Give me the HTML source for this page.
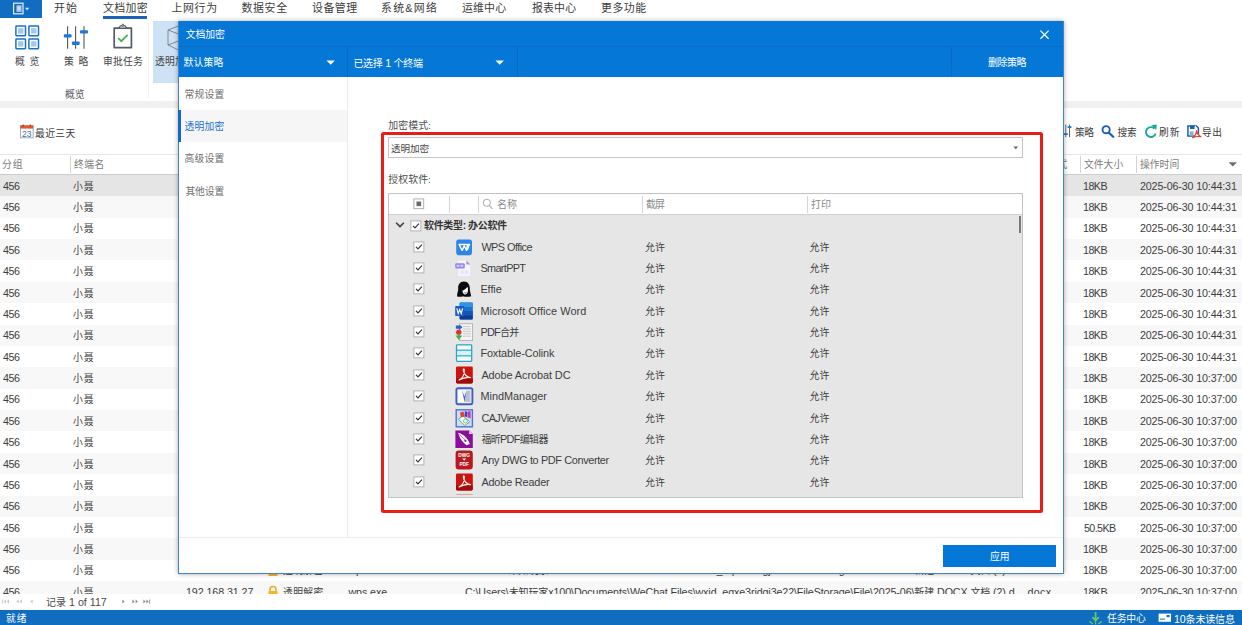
<!DOCTYPE html><html lang="zh-CN"><head><meta charset="utf-8"><title>文档加密</title><style>
*{margin:0;padding:0;box-sizing:border-box}
html,body{width:1242px;height:625px;overflow:hidden;background:#fff}
body{font-family:"Liberation Sans","Noto Sans CJK SC",sans-serif;position:relative}
.t{position:absolute;white-space:nowrap;line-height:16px;height:16px}
.r{position:absolute}
svg{position:absolute;overflow:visible}
.b{font-weight:bold}
</style></head><body>
<div class="r" style="left:0px;top:0px;width:42px;height:18px;background:#106dc2;"></div>
<svg style="left:12px;top:2px" width="20" height="14" viewBox="0 0 20 14"><rect x="1.6" y="1.2" width="9.4" height="10.6" fill="#1d64b2" stroke="#e4effb" stroke-width="1.2"/><rect x="4.4" y="3.2" width="5.2" height="6.8" fill="#9cc3ec"/><rect x="5.6" y="4.6" width="2.8" height="3.6" fill="#c9def5"/><path d="M12.9 5.8 L17.3 5.8 L15.1 8.2 Z" fill="#dbeafa"/></svg>
<div class="t menu" style="left:54.00px;top:0.40px;font-size:10.9px;color:#3c3c3c;letter-spacing:1.000px;">开始</div>
<div class="t menu" style="left:103.00px;top:0.40px;font-size:10.9px;color:#3c3c3c;letter-spacing:0.333px;">文档加密</div>
<div class="t menu" style="left:171.50px;top:0.40px;font-size:10.9px;color:#3c3c3c;letter-spacing:0.667px;">上网行为</div>
<div class="t menu" style="left:241.50px;top:0.40px;font-size:10.9px;color:#3c3c3c;letter-spacing:0.667px;">数据安全</div>
<div class="t menu" style="left:312.00px;top:0.40px;font-size:10.9px;color:#3c3c3c;letter-spacing:0.500px;">设备管理</div>
<div class="t menu" style="left:381.00px;top:0.40px;font-size:10.9px;color:#3c3c3c;letter-spacing:1.250px;">系统&amp;网络</div>
<div class="t menu" style="left:462.00px;top:0.40px;font-size:10.9px;color:#3c3c3c;letter-spacing:0.167px;">运维中心</div>
<div class="t menu" style="left:532.00px;top:0.40px;font-size:10.9px;color:#3c3c3c;letter-spacing:0.167px;">报表中心</div>
<div class="t menu" style="left:601.00px;top:0.40px;font-size:10.9px;color:#3c3c3c;letter-spacing:0.500px;">更多功能</div>
<div class="r" style="left:103px;top:16px;width:44px;height:2.5px;background:#1c62b6;"></div>
<svg style="left:0;top:0" width="200" height="100"><rect x="15.9" y="26.1" width="9.6" height="9.6" rx="0.6" fill="#fff" stroke="#1b72cb" stroke-width="1.5"/><rect x="18.0" y="28.200000000000003" width="5.4" height="5.4" fill="#a3c8ee"/><rect x="28.9" y="26.1" width="9.6" height="9.6" rx="0.6" fill="#fff" stroke="#1b72cb" stroke-width="1.5"/><rect x="31.0" y="28.200000000000003" width="5.4" height="5.4" fill="#a3c8ee"/><rect x="15.9" y="39.1" width="9.6" height="9.6" rx="0.6" fill="#fff" stroke="#1b72cb" stroke-width="1.5"/><rect x="18.0" y="41.2" width="5.4" height="5.4" fill="#a3c8ee"/><rect x="28.9" y="39.1" width="9.6" height="9.6" rx="0.6" fill="#fff" stroke="#1b72cb" stroke-width="1.5"/><rect x="31.0" y="41.2" width="5.4" height="5.4" fill="#a3c8ee"/></svg>
<svg style="left:0;top:0" width="200" height="100"><g stroke="#50545c" stroke-width="1.1"><line x1="67.6" y1="26.3" x2="67.6" y2="48.8"/><line x1="75.6" y1="26.3" x2="75.6" y2="48.8"/><line x1="84" y1="26.3" x2="84" y2="48.8"/></g><g fill="#1b78d6"><rect x="63.8" y="34.2" width="7.8" height="3.3" rx="0.8"/><rect x="71.9" y="41.6" width="7.8" height="3.3" rx="0.8"/><rect x="80" y="30.2" width="8" height="3.3" rx="0.8"/></g></svg>
<svg style="left:0;top:0" width="200" height="100"><rect x="114.2" y="28.1" width="17.2" height="19.5" fill="none" stroke="#555b66" stroke-width="1.7" stroke-linejoin="round"/><path d="M118.8 28 L120.4 25.9 L125.2 25.9 L126.8 28 Z" fill="#fff" stroke="#555b66" stroke-width="1.2" stroke-linejoin="round"/><circle cx="122.8" cy="25.2" r="1" fill="#fff" stroke="#555b66" stroke-width="1"/><path d="M118.2 38 L121.3 41.2 L127.6 34.8" fill="none" stroke="#3db24b" stroke-width="1.7"/></svg>
<div class="t rib" style="left:15.00px;top:53.70px;font-size:9.8px;color:#444;letter-spacing:1.000px;">概&nbsp;览</div>
<div class="t rib" style="left:64.00px;top:53.70px;font-size:9.8px;color:#444;letter-spacing:1.000px;">策&nbsp;略</div>
<div class="t rib" style="left:103.00px;top:53.70px;font-size:9.8px;color:#444;letter-spacing:0.167px;">审批任务</div>
<div class="r" style="left:152.8px;top:21px;width:40px;height:61.7px;background:#cee2f6;"></div>
<svg style="left:0;top:0" width="200" height="100"><path d="M178.5 26 L168 30 L168 45 L178.5 50 M168 30 L178.5 34 M168 45 L178.5 41" fill="none" stroke="#7a7f88" stroke-width="0.9"/></svg>
<div class="t rib" style="left:155.00px;top:53.70px;font-size:9.8px;color:#444;letter-spacing:0.167px;">透明加密</div>
<div class="r" style="left:147.6px;top:22px;width:1px;height:76px;background:#f4f1ee;"></div>
<div class="t rib" style="left:65.00px;top:86.90px;font-size:9.8px;color:#555;">概览</div>
<div class="r" style="left:0px;top:101px;width:1242px;height:7.4px;background:#f0f0f0;"></div>
<svg style="left:20px;top:124px" width="14" height="15" viewBox="0 0 14 15"><rect x="0.5" y="1.8" width="12.6" height="12" fill="#fff" stroke="#8fa6c4" stroke-width="0.9"/><rect x="0.3" y="1.4" width="13" height="3.2" fill="#e4572e"/><rect x="2.6" y="0.6" width="1.3" height="2" fill="#b5301a"/><rect x="9.6" y="0.6" width="1.3" height="2" fill="#b5301a"/><text x="6.8" y="12.6" font-size="8.6" text-anchor="middle" fill="#4a6fa5" font-family='"Liberation Sans",sans-serif'>23</text></svg>
<div class="t tb" style="left:35.00px;top:125.60px;font-size:9.8px;color:#3a3a3a;letter-spacing:0.333px;">最近三天</div>
<svg style="left:1060px;top:120px" width="182" height="24" viewBox="0 0 182 24"><g stroke="#50545c" stroke-width="0.9"><line x1="5.8" y1="4.6" x2="5.8" y2="17.2"/><line x1="9.5" y1="4.6" x2="9.5" y2="17.2"/></g><rect x="3.8" y="13.2" width="4" height="1.8" fill="#1b78d6"/><rect x="7.6" y="6.2" width="3.8" height="1.8" fill="#1b78d6"/><circle cx="46.1" cy="9.7" r="3.6" fill="none" stroke="#1a5fb4" stroke-width="1.9"/><line x1="49" y1="12.7" x2="53.2" y2="16.8" stroke="#1a5fb4" stroke-width="2.3" stroke-linecap="round"/><path d="M94.4 8.6 A4.9 4.9 0 1 0 95.6 13.4" fill="none" stroke="#17a99b" stroke-width="1.9"/><path d="M91.4 5.2 L96.8 4.4 L96.2 10 Z" fill="#17a99b"/><path d="M127.9 6 L136.4 6 L138.4 8 L138.4 16 L127.9 16 Z" fill="#fff" stroke="#1b5fb8" stroke-width="1.5"/><rect x="130" y="5.6" width="4.6" height="3.4" fill="#1b5fb8"/><rect x="134.9" y="6.2" width="1.2" height="2.2" fill="#fff"/><rect x="129.6" y="11.4" width="4" height="4.4" fill="#86afe2"/><path d="M132.6 17.8 C135 16 136.4 13.4 136.6 10.6 C137.2 13.4 138.6 15.6 141 16.8 C138 16.2 135.4 16.6 132.6 17.8 Z" fill="#fff" stroke="#e53b24" stroke-width="1.1" stroke-linejoin="round"/></svg>
<div class="t tb" style="left:1075.00px;top:124.50px;font-size:9.7px;color:#3a3a3a;letter-spacing:-0.500px;">策略</div>
<div class="t tb" style="left:1117.40px;top:124.50px;font-size:9.7px;color:#3a3a3a;letter-spacing:-0.200px;">搜索</div>
<div class="t tb" style="left:1159.00px;top:124.50px;font-size:9.7px;color:#3a3a3a;letter-spacing:1.000px;">刷新</div>
<div class="t tb" style="left:1202.00px;top:124.50px;font-size:9.7px;color:#3a3a3a;letter-spacing:0.600px;">导出</div>
<div class="r" style="left:0px;top:154px;width:1242px;height:1px;background:#e6e6e6;"></div>
<div class="r" style="left:0px;top:174.3px;width:1242px;height:1.4px;background:#cdcdcd;"></div>
<div class="r" style="left:70.2px;top:156.2px;width:1px;height:16.6px;background:#d4d4d4;"></div>
<div class="r" style="left:1080px;top:156.2px;width:1px;height:16.6px;background:#d4d4d4;"></div>
<div class="r" style="left:1136px;top:156.2px;width:1px;height:16.6px;background:#d4d4d4;"></div>
<div class="t hd" style="left:2.00px;top:157.20px;font-size:9.8px;color:#7b7b7b;letter-spacing:1.000px;">分组</div>
<div class="t hd" style="left:74.00px;top:157.20px;font-size:9.8px;color:#7b7b7b;letter-spacing:0.500px;">终端名</div>
<div class="t hd" style="left:1057.60px;top:157.20px;font-size:9.8px;color:#7b7b7b;">式</div>
<div class="t hd" style="left:1084.00px;top:157.20px;font-size:9.8px;color:#7b7b7b;">文件大小</div>
<div class="t hd" style="left:1140.00px;top:157.20px;font-size:9.8px;color:#7b7b7b;">操作时间</div>
<svg style="left:1228px;top:161px" width="10" height="6"><path d="M0.6 1.2 L9 1.2 L4.8 5.4 Z" fill="#6e6e6e"/></svg>
<div class="r" style="left:0px;top:175.0px;width:1242px;height:21.37px;background:#e5e5e5;"></div>
<div class="r" style="left:0px;top:196.37px;width:1242px;height:21.37px;background:#f8f8f8;"></div>
<div class="r" style="left:0px;top:217.74px;width:1242px;height:21.37px;background:#ffffff;"></div>
<div class="r" style="left:0px;top:239.11px;width:1242px;height:21.37px;background:#f8f8f8;"></div>
<div class="r" style="left:0px;top:260.48px;width:1242px;height:21.37px;background:#ffffff;"></div>
<div class="r" style="left:0px;top:281.85px;width:1242px;height:21.37px;background:#f8f8f8;"></div>
<div class="r" style="left:0px;top:303.22px;width:1242px;height:21.37px;background:#ffffff;"></div>
<div class="r" style="left:0px;top:324.59px;width:1242px;height:21.37px;background:#f8f8f8;"></div>
<div class="r" style="left:0px;top:345.96px;width:1242px;height:21.37px;background:#ffffff;"></div>
<div class="r" style="left:0px;top:367.33px;width:1242px;height:21.37px;background:#f8f8f8;"></div>
<div class="r" style="left:0px;top:388.7px;width:1242px;height:21.37px;background:#ffffff;"></div>
<div class="r" style="left:0px;top:410.07px;width:1242px;height:21.37px;background:#f8f8f8;"></div>
<div class="r" style="left:0px;top:431.44px;width:1242px;height:21.37px;background:#ffffff;"></div>
<div class="r" style="left:0px;top:452.81px;width:1242px;height:21.37px;background:#f8f8f8;"></div>
<div class="r" style="left:0px;top:474.18px;width:1242px;height:21.37px;background:#ffffff;"></div>
<div class="r" style="left:0px;top:495.55px;width:1242px;height:21.37px;background:#f8f8f8;"></div>
<div class="r" style="left:0px;top:516.92px;width:1242px;height:21.37px;background:#ffffff;"></div>
<div class="r" style="left:0px;top:538.29px;width:1242px;height:21.37px;background:#f8f8f8;"></div>
<div class="r" style="left:0px;top:559.66px;width:1242px;height:21.37px;background:#ffffff;"></div>
<div class="r" style="left:0px;top:581.03px;width:1242px;height:21.37px;background:#f8f8f8;"></div>
<div class="t num" style="left:3.00px;top:177.75px;font-size:10.7px;color:#3d3d3d;letter-spacing:-0.400px;">456</div>
<div class="t cn" style="left:73.00px;top:178.75px;font-size:9.8px;color:#3d3d3d;letter-spacing:1.000px;">小聂</div>
<div class="t num" style="left:1083.00px;top:177.75px;font-size:10.7px;color:#3d3d3d;letter-spacing:-0.533px;">18KB</div>
<div class="t num dt" style="left:1140.00px;top:177.75px;font-size:10.7px;color:#3d3d3d;letter-spacing:-0.133px;">2025-06-30 10:44:31</div>
<div class="t num" style="left:3.00px;top:199.12px;font-size:10.7px;color:#3d3d3d;letter-spacing:-0.400px;">456</div>
<div class="t cn" style="left:73.00px;top:200.12px;font-size:9.8px;color:#3d3d3d;letter-spacing:1.000px;">小聂</div>
<div class="t num" style="left:1083.00px;top:199.12px;font-size:10.7px;color:#3d3d3d;letter-spacing:-0.533px;">18KB</div>
<div class="t num dt" style="left:1140.00px;top:199.12px;font-size:10.7px;color:#3d3d3d;letter-spacing:-0.133px;">2025-06-30 10:44:31</div>
<div class="t num" style="left:3.00px;top:220.49px;font-size:10.7px;color:#3d3d3d;letter-spacing:-0.400px;">456</div>
<div class="t cn" style="left:73.00px;top:221.49px;font-size:9.8px;color:#3d3d3d;letter-spacing:1.000px;">小聂</div>
<div class="t num" style="left:1083.00px;top:220.49px;font-size:10.7px;color:#3d3d3d;letter-spacing:-0.533px;">18KB</div>
<div class="t num dt" style="left:1140.00px;top:220.49px;font-size:10.7px;color:#3d3d3d;letter-spacing:-0.133px;">2025-06-30 10:44:31</div>
<div class="t num" style="left:3.00px;top:241.86px;font-size:10.7px;color:#3d3d3d;letter-spacing:-0.400px;">456</div>
<div class="t cn" style="left:73.00px;top:242.86px;font-size:9.8px;color:#3d3d3d;letter-spacing:1.000px;">小聂</div>
<div class="t num" style="left:1083.00px;top:241.86px;font-size:10.7px;color:#3d3d3d;letter-spacing:-0.533px;">18KB</div>
<div class="t num dt" style="left:1140.00px;top:241.86px;font-size:10.7px;color:#3d3d3d;letter-spacing:-0.133px;">2025-06-30 10:44:31</div>
<div class="t num" style="left:3.00px;top:263.23px;font-size:10.7px;color:#3d3d3d;letter-spacing:-0.400px;">456</div>
<div class="t cn" style="left:73.00px;top:264.23px;font-size:9.8px;color:#3d3d3d;letter-spacing:1.000px;">小聂</div>
<div class="t num" style="left:1083.00px;top:263.23px;font-size:10.7px;color:#3d3d3d;letter-spacing:-0.533px;">18KB</div>
<div class="t num dt" style="left:1140.00px;top:263.23px;font-size:10.7px;color:#3d3d3d;letter-spacing:-0.133px;">2025-06-30 10:44:31</div>
<div class="t num" style="left:3.00px;top:284.60px;font-size:10.7px;color:#3d3d3d;letter-spacing:-0.400px;">456</div>
<div class="t cn" style="left:73.00px;top:285.60px;font-size:9.8px;color:#3d3d3d;letter-spacing:1.000px;">小聂</div>
<div class="t num" style="left:1083.00px;top:284.60px;font-size:10.7px;color:#3d3d3d;letter-spacing:-0.533px;">18KB</div>
<div class="t num dt" style="left:1140.00px;top:284.60px;font-size:10.7px;color:#3d3d3d;letter-spacing:-0.133px;">2025-06-30 10:44:31</div>
<div class="t num" style="left:3.00px;top:305.97px;font-size:10.7px;color:#3d3d3d;letter-spacing:-0.400px;">456</div>
<div class="t cn" style="left:73.00px;top:306.97px;font-size:9.8px;color:#3d3d3d;letter-spacing:1.000px;">小聂</div>
<div class="t num" style="left:1083.00px;top:305.97px;font-size:10.7px;color:#3d3d3d;letter-spacing:-0.533px;">18KB</div>
<div class="t num dt" style="left:1140.00px;top:305.97px;font-size:10.7px;color:#3d3d3d;letter-spacing:-0.133px;">2025-06-30 10:44:31</div>
<div class="t num" style="left:3.00px;top:327.34px;font-size:10.7px;color:#3d3d3d;letter-spacing:-0.400px;">456</div>
<div class="t cn" style="left:73.00px;top:328.34px;font-size:9.8px;color:#3d3d3d;letter-spacing:1.000px;">小聂</div>
<div class="t num" style="left:1083.00px;top:327.34px;font-size:10.7px;color:#3d3d3d;letter-spacing:-0.533px;">18KB</div>
<div class="t num dt" style="left:1140.00px;top:327.34px;font-size:10.7px;color:#3d3d3d;letter-spacing:-0.133px;">2025-06-30 10:44:31</div>
<div class="t num" style="left:3.00px;top:348.71px;font-size:10.7px;color:#3d3d3d;letter-spacing:-0.400px;">456</div>
<div class="t cn" style="left:73.00px;top:349.71px;font-size:9.8px;color:#3d3d3d;letter-spacing:1.000px;">小聂</div>
<div class="t num" style="left:1083.00px;top:348.71px;font-size:10.7px;color:#3d3d3d;letter-spacing:-0.533px;">18KB</div>
<div class="t num dt" style="left:1140.00px;top:348.71px;font-size:10.7px;color:#3d3d3d;letter-spacing:-0.133px;">2025-06-30 10:44:31</div>
<div class="t num" style="left:3.00px;top:370.08px;font-size:10.7px;color:#3d3d3d;letter-spacing:-0.400px;">456</div>
<div class="t cn" style="left:73.00px;top:371.08px;font-size:9.8px;color:#3d3d3d;letter-spacing:1.000px;">小聂</div>
<div class="t num" style="left:1083.00px;top:370.08px;font-size:10.7px;color:#3d3d3d;letter-spacing:-0.533px;">18KB</div>
<div class="t num dt" style="left:1140.00px;top:370.08px;font-size:10.7px;color:#3d3d3d;letter-spacing:-0.133px;">2025-06-30 10:37:00</div>
<div class="t num" style="left:3.00px;top:391.45px;font-size:10.7px;color:#3d3d3d;letter-spacing:-0.400px;">456</div>
<div class="t cn" style="left:73.00px;top:392.45px;font-size:9.8px;color:#3d3d3d;letter-spacing:1.000px;">小聂</div>
<div class="t num" style="left:1083.00px;top:391.45px;font-size:10.7px;color:#3d3d3d;letter-spacing:-0.533px;">18KB</div>
<div class="t num dt" style="left:1140.00px;top:391.45px;font-size:10.7px;color:#3d3d3d;letter-spacing:-0.133px;">2025-06-30 10:37:00</div>
<div class="t num" style="left:3.00px;top:412.82px;font-size:10.7px;color:#3d3d3d;letter-spacing:-0.400px;">456</div>
<div class="t cn" style="left:73.00px;top:413.82px;font-size:9.8px;color:#3d3d3d;letter-spacing:1.000px;">小聂</div>
<div class="t num" style="left:1083.00px;top:412.82px;font-size:10.7px;color:#3d3d3d;letter-spacing:-0.533px;">18KB</div>
<div class="t num dt" style="left:1140.00px;top:412.82px;font-size:10.7px;color:#3d3d3d;letter-spacing:-0.133px;">2025-06-30 10:37:00</div>
<div class="t num" style="left:3.00px;top:434.19px;font-size:10.7px;color:#3d3d3d;letter-spacing:-0.400px;">456</div>
<div class="t cn" style="left:73.00px;top:435.19px;font-size:9.8px;color:#3d3d3d;letter-spacing:1.000px;">小聂</div>
<div class="t num" style="left:1083.00px;top:434.19px;font-size:10.7px;color:#3d3d3d;letter-spacing:-0.533px;">18KB</div>
<div class="t num dt" style="left:1140.00px;top:434.19px;font-size:10.7px;color:#3d3d3d;letter-spacing:-0.133px;">2025-06-30 10:37:00</div>
<div class="t num" style="left:3.00px;top:455.56px;font-size:10.7px;color:#3d3d3d;letter-spacing:-0.400px;">456</div>
<div class="t cn" style="left:73.00px;top:456.56px;font-size:9.8px;color:#3d3d3d;letter-spacing:1.000px;">小聂</div>
<div class="t num" style="left:1083.00px;top:455.56px;font-size:10.7px;color:#3d3d3d;letter-spacing:-0.533px;">18KB</div>
<div class="t num dt" style="left:1140.00px;top:455.56px;font-size:10.7px;color:#3d3d3d;letter-spacing:-0.133px;">2025-06-30 10:37:00</div>
<div class="t num" style="left:3.00px;top:476.93px;font-size:10.7px;color:#3d3d3d;letter-spacing:-0.400px;">456</div>
<div class="t cn" style="left:73.00px;top:477.93px;font-size:9.8px;color:#3d3d3d;letter-spacing:1.000px;">小聂</div>
<div class="t num" style="left:1083.00px;top:476.93px;font-size:10.7px;color:#3d3d3d;letter-spacing:-0.533px;">18KB</div>
<div class="t num dt" style="left:1140.00px;top:476.93px;font-size:10.7px;color:#3d3d3d;letter-spacing:-0.133px;">2025-06-30 10:37:00</div>
<div class="t num" style="left:3.00px;top:498.30px;font-size:10.7px;color:#3d3d3d;letter-spacing:-0.400px;">456</div>
<div class="t cn" style="left:73.00px;top:499.30px;font-size:9.8px;color:#3d3d3d;letter-spacing:1.000px;">小聂</div>
<div class="t num" style="left:1083.00px;top:498.30px;font-size:10.7px;color:#3d3d3d;letter-spacing:-0.533px;">18KB</div>
<div class="t num dt" style="left:1140.00px;top:498.30px;font-size:10.7px;color:#3d3d3d;letter-spacing:-0.133px;">2025-06-30 10:37:00</div>
<div class="t num" style="left:3.00px;top:519.67px;font-size:10.7px;color:#3d3d3d;letter-spacing:-0.400px;">456</div>
<div class="t cn" style="left:73.00px;top:520.67px;font-size:9.8px;color:#3d3d3d;letter-spacing:1.000px;">小聂</div>
<div class="t num" style="left:1084.00px;top:519.67px;font-size:10.7px;color:#3d3d3d;letter-spacing:-0.600px;">50.5KB</div>
<div class="t num dt" style="left:1140.00px;top:519.67px;font-size:10.7px;color:#3d3d3d;letter-spacing:-0.133px;">2025-06-30 10:37:00</div>
<div class="t num" style="left:3.00px;top:541.04px;font-size:10.7px;color:#3d3d3d;letter-spacing:-0.400px;">456</div>
<div class="t cn" style="left:73.00px;top:542.04px;font-size:9.8px;color:#3d3d3d;letter-spacing:1.000px;">小聂</div>
<div class="t num" style="left:1083.00px;top:541.04px;font-size:10.7px;color:#3d3d3d;letter-spacing:-0.533px;">18KB</div>
<div class="t num dt" style="left:1140.00px;top:541.04px;font-size:10.7px;color:#3d3d3d;letter-spacing:-0.133px;">2025-06-30 10:37:00</div>
<div class="t num" style="left:3.00px;top:562.41px;font-size:10.7px;color:#3d3d3d;letter-spacing:-0.400px;">456</div>
<div class="t cn" style="left:73.00px;top:563.41px;font-size:9.8px;color:#3d3d3d;letter-spacing:1.000px;">小聂</div>
<div class="t num" style="left:1083.00px;top:562.41px;font-size:10.7px;color:#3d3d3d;letter-spacing:-0.533px;">18KB</div>
<div class="t num dt" style="left:1140.00px;top:562.41px;font-size:10.7px;color:#3d3d3d;letter-spacing:-0.133px;">2025-06-30 10:37:00</div>
<div class="t num" style="left:186.00px;top:562.41px;font-size:10.7px;color:#3d3d3d;letter-spacing:-0.083px;">192.168.31.27</div>
<svg style="left:267px;top:564.91px" width="12" height="12"><path d="M3 5 V3.6 A3 3 0 0 1 9 3.6 V5" fill="none" stroke="#f0a81c" stroke-width="1.5"/><rect x="1.4" y="5" width="9.2" height="6" rx="0.8" fill="#f5b52a"/></svg>
<div class="t cn" style="left:283.00px;top:563.41px;font-size:9.8px;color:#3d3d3d;letter-spacing:0.333px;">透明解密</div>
<div class="t num" style="left:348.40px;top:562.41px;font-size:10.7px;color:#3d3d3d;letter-spacing:-0.067px;">wps.exe</div>
<div class="t num path" style="left:465.00px;top:562.41px;font-size:10.7px;color:#3d3d3d;letter-spacing:-0.101px;">C:\Users\<span style="font-size:10.0px">未知玩家</span>x100\Documents\WeChat Files\wxid_eqxe3ridgj3e22\FileStorage\File\2025-06\<span style="font-size:10.0px">新建</span> DOCX <span style="font-size:10.0px">文档</span> (2).d...</div>
<div class="t num" style="left:1027.60px;top:562.41px;font-size:10.7px;color:#3d3d3d;letter-spacing:0.267px;">docx</div>
<div class="t num" style="left:3.00px;top:583.78px;font-size:10.7px;color:#3d3d3d;letter-spacing:-0.400px;">456</div>
<div class="t cn" style="left:73.00px;top:584.78px;font-size:9.8px;color:#3d3d3d;letter-spacing:1.000px;">小聂</div>
<div class="t num" style="left:1083.00px;top:583.78px;font-size:10.7px;color:#3d3d3d;letter-spacing:-0.533px;">18KB</div>
<div class="t num dt" style="left:1140.00px;top:583.78px;font-size:10.7px;color:#3d3d3d;letter-spacing:-0.133px;">2025-06-30 10:37:00</div>
<div class="t num" style="left:186.00px;top:583.78px;font-size:10.7px;color:#3d3d3d;letter-spacing:-0.083px;">192.168.31.27</div>
<svg style="left:267px;top:586.28px" width="12" height="12"><path d="M3 5 V3.6 A3 3 0 0 1 9 3.6 V5" fill="none" stroke="#f0a81c" stroke-width="1.5"/><rect x="1.4" y="5" width="9.2" height="6" rx="0.8" fill="#f5b52a"/></svg>
<div class="t cn" style="left:283.00px;top:584.78px;font-size:9.8px;color:#3d3d3d;letter-spacing:0.333px;">透明解密</div>
<div class="t num" style="left:348.40px;top:583.78px;font-size:10.7px;color:#3d3d3d;letter-spacing:-0.067px;">wps.exe</div>
<div class="t num path" style="left:465.00px;top:583.78px;font-size:10.7px;color:#3d3d3d;letter-spacing:-0.101px;">C:\Users\<span style="font-size:10.0px">未知玩家</span>x100\Documents\WeChat Files\wxid_eqxe3ridgj3e22\FileStorage\File\2025-06\<span style="font-size:10.0px">新建</span> DOCX <span style="font-size:10.0px">文档</span> (2).d...</div>
<div class="t num" style="left:1027.60px;top:583.78px;font-size:10.7px;color:#3d3d3d;letter-spacing:0.267px;">docx</div>
<div class="r" style="left:0px;top:594px;width:1242px;height:15.4px;background:#fff;"></div>
<svg style="left:0;top:594px" width="160" height="15" viewBox="0 0 160 15"><g fill="#c4c4c4"><rect x="2.2" y="5.6" width="0.9" height="4"/><path d="M6 5.6 V9.6 L3.8 7.6 Z"/><path d="M9 5.6 V9.6 L6.8 7.6 Z"/><path d="M18.6 5.6 V9.6 L16.4 7.6 Z"/><path d="M21.8 5.6 V9.6 L19.6 7.6 Z"/><path d="M32.6 5.6 V9.6 L30.4 7.6 Z"/></g><g fill="#8a8a8a"><path d="M122.4 5.6 V9.6 L124.6 7.6 Z"/><path d="M132.4 5.6 V9.6 L134.6 7.6 Z"/><path d="M135.6 5.6 V9.6 L137.8 7.6 Z"/><path d="M143.4 5.6 V9.6 L145.6 7.6 Z"/><path d="M146.4 5.6 V9.6 L148.6 7.6 Z"/><rect x="149.2" y="5.6" width="0.9" height="4"/></g></svg>
<div class="t num nav" style="left:46.00px;top:593.80px;font-size:10.7px;color:#4a4a4a;"><span style="font-size:10.0px">记录</span> 1 of 117</div>
<div class="r" style="left:0px;top:609.5px;width:1242px;height:16px;background:#0e6dbe;"></div>
<div class="t st" style="left:6.00px;top:611.20px;font-size:9.8px;color:#fff;letter-spacing:1.000px;">就绪</div>
<svg style="left:1088px;top:611px" width="16" height="14"><path d="M7.6 1 V9 M4.4 6.2 L7.6 9.6 L10.8 6.2" fill="none" stroke="#68c46f" stroke-width="1.8"/><path d="M1.4 10.4 L5 13 M13.8 10.4 L10.2 13 M7.6 10.6 V13.6" stroke="#68c46f" stroke-width="1.3" fill="none"/></svg>
<div class="t st" style="left:1107.00px;top:611.20px;font-size:9.8px;color:#fff;letter-spacing:-0.167px;">任务中心</div>
<svg style="left:1158px;top:613px" width="14" height="10"><rect x="0.6" y="0.6" width="12.4" height="8.2" fill="#fff"/><rect x="8.6" y="2" width="3" height="2.2" fill="#0e6dbe"/><rect x="2" y="5.6" width="5" height="1" fill="#0e6dbe"/></svg>
<div class="t st" style="left:1174.00px;top:611.20px;font-size:10.7px;color:#fff;letter-spacing:-0.167px;">10<span style="font-size:10.0px">条未读信息</span></div>
<div class="r" style="left:178px;top:20.6px;width:885.6px;height:553.6px;background:#fff;border:1px solid #4384c6;box-shadow:0 0 4.5px rgba(0,0,0,.34)"></div>
<div class="r" style="left:179px;top:21.4px;width:883.6px;height:55.8px;background:#0578d7;"></div>
<div class="r" style="left:179px;top:46.2px;width:883.6px;height:0.9px;background:#0a6cc6;"></div>
<div class="r" style="left:347px;top:47.2px;width:1px;height:30px;background:#0a69c0;"></div>
<div class="r" style="left:517px;top:47.2px;width:1px;height:30px;background:#0a69c0;"></div>
<div class="r" style="left:951px;top:47.2px;width:1px;height:30px;background:#0a69c0;"></div>
<div class="t dl" style="left:185.80px;top:27.40px;font-size:9.9px;color:#fff;letter-spacing:-0.167px;">文档加密</div>
<svg style="left:1039px;top:28.5px" width="12" height="12"><path d="M1.4 1.6 L9.6 9.8 M9.6 1.6 L1.4 9.8" stroke="#fff" stroke-width="1.25" fill="none"/></svg>
<div class="t dl" style="left:183.60px;top:55.40px;font-size:9.8px;color:#fff;letter-spacing:0.200px;">默认策略</div>
<svg style="left:326.4px;top:60px" width="10" height="6"><path d="M0.5 0.6 H8.9 L4.7 4.7 Z" fill="#fff"/></svg>
<div class="t dl sel" style="left:353.40px;top:54.60px;font-size:10.7px;color:#fff;letter-spacing:-0.300px;"><span style="font-size:10.0px">已选择</span> 1 <span style="font-size:10.0px">个终端</span></div>
<svg style="left:495.4px;top:60px" width="10" height="6"><path d="M0.5 0.6 H8.9 L4.7 4.7 Z" fill="#fff"/></svg>
<div class="t dl" style="left:987.90px;top:55.40px;font-size:10.0px;color:#fff;letter-spacing:-0.433px;">删除策略</div>
<div class="r" style="left:347px;top:77.2px;width:1px;height:460px;background:#ececec;"></div>
<div class="r" style="left:179px;top:110px;width:168px;height:32px;background:#f6f6f6;"></div>
<div class="r" style="left:178.4px;top:110px;width:2.8px;height:32px;background:#1267c9;"></div>
<div class="t sb" style="left:184.40px;top:87.20px;font-size:9.8px;color:#6e6e6e;letter-spacing:0.200px;">常规设置</div>
<div class="t sb" style="left:184.40px;top:119.30px;font-size:9.8px;color:#1a73d4;letter-spacing:0.200px;">透明加密</div>
<div class="t sb" style="left:184.40px;top:151.40px;font-size:9.8px;color:#6e6e6e;letter-spacing:0.200px;">高级设置</div>
<div class="t sb" style="left:185.40px;top:183.50px;font-size:9.8px;color:#6e6e6e;letter-spacing:-0.133px;">其他设置</div>
<div class="r" style="left:179px;top:537px;width:883.6px;height:1px;background:#ececec;"></div>
<div class="r" style="left:943px;top:545.2px;width:113.4px;height:21.8px;background:#0578d7;"></div>
<div class="t dl" style="left:990.00px;top:549.20px;font-size:9.8px;color:#fff;">应用</div>
<div class="t lb" style="left:388.30px;top:117.70px;font-size:9.9px;color:#505050;letter-spacing:0.075px;">加密模式:</div>
<div class="r" style="left:388px;top:136.9px;width:635px;height:21.2px;background:#fff;border:1px solid #c4c4c4"></div>
<div class="t lb" style="left:391.10px;top:141.20px;font-size:9.6px;color:#4a4a4a;letter-spacing:-0.100px;">透明加密</div>
<svg style="left:1013px;top:146px" width="6" height="4"><path d="M0.4 0.6 H5.2 L2.8 3.2 Z" fill="#666"/></svg>
<div class="t lb" style="left:388.30px;top:171.80px;font-size:9.9px;color:#505050;letter-spacing:0.075px;">授权软件:</div>
<div class="r" style="left:388px;top:193px;width:635px;height:304.6px;background:#e6e6e6;border:1px solid #c3c3c3;overflow:hidden"></div>
<div class="r" style="left:389px;top:194px;width:633px;height:20.4px;background:#fff;"></div>
<div class="r" style="left:389px;top:214.2px;width:633px;height:1px;background:#d0d0d0;"></div>
<div class="r" style="left:449px;top:195.5px;width:1px;height:17.5px;background:#d5d5d5;"></div>
<div class="r" style="left:478px;top:195.5px;width:1px;height:17.5px;background:#d5d5d5;"></div>
<div class="r" style="left:642px;top:195.5px;width:1px;height:17.5px;background:#d5d5d5;"></div>
<div class="r" style="left:806.5px;top:195.5px;width:1px;height:17.5px;background:#d5d5d5;"></div>
<svg style="left:413px;top:198px" width="12" height="12"><rect x="0.9" y="0.9" width="9.8" height="9.8" fill="#fff" stroke="#a9a9a9" stroke-width="0.9"/><rect x="3.5" y="3.5" width="4.6" height="4.6" fill="#6a6a6a"/></svg>
<svg style="left:482px;top:198px" width="12" height="12"><circle cx="4.8" cy="4.8" r="3.6" fill="none" stroke="#a8a8a8" stroke-width="1"/><line x1="7.4" y1="7.6" x2="10.4" y2="10.8" stroke="#a8a8a8" stroke-width="1.1"/></svg>
<div class="t gh" style="left:497.00px;top:197.20px;font-size:10.0px;color:#8a8a8a;">名称</div>
<div class="t gh" style="left:646.00px;top:197.20px;font-size:10.0px;color:#8a8a8a;letter-spacing:-1.000px;">截屏</div>
<div class="t gh" style="left:811.00px;top:197.20px;font-size:10.0px;color:#8a8a8a;">打印</div>
<div class="r" style="left:1018.9px;top:216px;width:2.2px;height:17px;background:#7a7a7a;"></div>
<svg style="left:395px;top:221px" width="10" height="8"><path d="M1.2 1.8 L5 5.6 L8.8 1.8" fill="none" stroke="#3a3a3a" stroke-width="1.5"/></svg>
<svg style="left:410.4px;top:219.60px" width="12" height="12"><rect x="0.9" y="0.9" width="10" height="10" fill="#fff" stroke="#ababab" stroke-width="0.9"/><path d="M3 5.8 L5 7.9 L8.9 3.7" fill="none" stroke="#333" stroke-width="1.15"/></svg>
<div class="t b grp" style="left:424.00px;top:218.20px;font-size:10.0px;color:#333;letter-spacing:-0.333px;">软件类型: 办公软件</div>
<svg style="left:413.4px;top:240.60px" width="12" height="12"><rect x="0.9" y="0.9" width="10" height="10" fill="#fff" stroke="#ababab" stroke-width="0.9"/><path d="M3 5.8 L5 7.9 L8.9 3.7" fill="none" stroke="#333" stroke-width="1.15"/></svg>
<svg style="left:455px;top:237.60px" width="18" height="18" viewBox="0 0 18 18"><rect x="1.2" y="1.4" width="15.8" height="15.8" rx="2.4" fill="#2b85ec"/><path d="M4.1 6.5 H14.5 L12.6 6.5 L11.5 12.3 L9.3 8 L7.1 12.3 L4.1 6.5 Z" fill="none" stroke="#fff" stroke-width="1.45" stroke-linejoin="round"/><path d="M14.3 6.5 L12.3 12" stroke="#fff" stroke-width="1.3"/></svg>
<div class="t num it" style="left:481.40px;top:238.60px;font-size:10.9px;color:#3d3d3d;letter-spacing:-0.556px;">WPS Office</div>
<div class="t cn al" style="left:645.00px;top:239.60px;font-size:10.0px;color:#3d3d3d;">允许</div>
<div class="t cn al" style="left:809.40px;top:239.60px;font-size:10.0px;color:#3d3d3d;letter-spacing:0.200px;">允许</div>
<svg style="left:413.4px;top:261.97px" width="12" height="12"><rect x="0.9" y="0.9" width="10" height="10" fill="#fff" stroke="#ababab" stroke-width="0.9"/><path d="M3 5.8 L5 7.9 L8.9 3.7" fill="none" stroke="#333" stroke-width="1.15"/></svg>
<svg style="left:455px;top:258.97px" width="18" height="18" viewBox="0 0 18 18"><path d="M3.2 1.8 H11.6 L15 5.4 V17 H3.2 Z" fill="#f7f4ff"/><path d="M11.4 1.6 L11.4 5.6 H15.2 Z" fill="#9e93c9"/><rect x="0.2" y="4.2" width="9.6" height="5.2" rx="1" fill="#9a86e8"/><rect x="1.6" y="5.8" width="2.8" height="2" fill="#d6ccfa"/><rect x="5.4" y="5.8" width="2.8" height="2" fill="#d6ccfa"/><rect x="5.4" y="11.6" width="3.2" height="3.6" fill="#e9e2fd"/><rect x="9.6" y="11.6" width="3.6" height="3.6" fill="#e9e2fd"/></svg>
<div class="t num it" style="left:480.40px;top:259.97px;font-size:10.9px;color:#3d3d3d;letter-spacing:-0.657px;">SmartPPT</div>
<div class="t cn al" style="left:645.00px;top:260.97px;font-size:10.0px;color:#3d3d3d;">允许</div>
<div class="t cn al" style="left:809.40px;top:260.97px;font-size:10.0px;color:#3d3d3d;letter-spacing:0.200px;">允许</div>
<svg style="left:413.4px;top:283.34px" width="12" height="12"><rect x="0.9" y="0.9" width="10" height="10" fill="#fff" stroke="#ababab" stroke-width="0.9"/><path d="M3 5.8 L5 7.9 L8.9 3.7" fill="none" stroke="#333" stroke-width="1.15"/></svg>
<svg style="left:455px;top:280.34px" width="18" height="18" viewBox="0 0 18 18"><path d="M9 1.4 C5 1.4 2.8 4.6 3.2 8.6 C3.4 10.6 2.2 12.8 2 16.4 C5 17 7 16.8 8 16.2 C10 17 13.6 17 16.2 16.2 C15.8 13 14.8 11.4 14.8 8.4 C14.8 4.2 12.6 1.4 9 1.4 Z" fill="#0b0b0b"/><path d="M7.4 10.6 C8.6 10.4 11.6 8.6 12.4 6.8 C13.6 9.6 13.2 13.8 10.4 14.6 C8.6 14.6 7.4 12.6 7.4 10.6 Z" fill="#fff"/><path d="M9.2 12.6 C10 13.2 10.8 13.2 11.6 12.4" stroke="#0b0b0b" stroke-width="0.6" fill="none"/></svg>
<div class="t num it" style="left:480.40px;top:281.34px;font-size:10.9px;color:#3d3d3d;letter-spacing:-0.050px;">Effie</div>
<div class="t cn al" style="left:645.00px;top:282.34px;font-size:10.0px;color:#3d3d3d;">允许</div>
<div class="t cn al" style="left:809.40px;top:282.34px;font-size:10.0px;color:#3d3d3d;letter-spacing:0.200px;">允许</div>
<svg style="left:413.4px;top:304.71px" width="12" height="12"><rect x="0.9" y="0.9" width="10" height="10" fill="#fff" stroke="#ababab" stroke-width="0.9"/><path d="M3 5.8 L5 7.9 L8.9 3.7" fill="none" stroke="#333" stroke-width="1.15"/></svg>
<svg style="left:455px;top:301.71px" width="18" height="18" viewBox="0 0 18 18"><rect x="4.6" y="0.6" width="13.2" height="16.8" rx="1" fill="#1d6fd0"/><path d="M5.6 0.6 H16.8 A1 1 0 0 1 17.8 1.6 V5 H4.6 V1.6 A1 1 0 0 1 5.6 0.6 Z" fill="#2f93e6"/><rect x="4.6" y="9" width="13.2" height="4.2" fill="#1656b8"/><path d="M4.6 13.2 H17.8 V16.4 A1 1 0 0 1 16.8 17.4 H5.6 A1 1 0 0 1 4.6 16.4 Z" fill="#0f3d92"/><rect x="0.2" y="4" width="9" height="10" rx="0.8" fill="#1a5cc0"/><path d="M1.8 6.4 L3.2 11.6 L4.7 7.4 L6.2 11.6 L7.6 6.4" fill="none" stroke="#fff" stroke-width="1.15"/></svg>
<div class="t num it" style="left:480.40px;top:302.71px;font-size:10.9px;color:#3d3d3d;letter-spacing:0.085px;">Microsoft Office Word</div>
<div class="t cn al" style="left:645.00px;top:303.71px;font-size:10.0px;color:#3d3d3d;">允许</div>
<div class="t cn al" style="left:809.40px;top:303.71px;font-size:10.0px;color:#3d3d3d;letter-spacing:0.200px;">允许</div>
<svg style="left:413.4px;top:326.08px" width="12" height="12"><rect x="0.9" y="0.9" width="10" height="10" fill="#fff" stroke="#ababab" stroke-width="0.9"/><path d="M3 5.8 L5 7.9 L8.9 3.7" fill="none" stroke="#333" stroke-width="1.15"/></svg>
<svg style="left:455px;top:323.08px" width="18" height="18" viewBox="0 0 18 18"><rect x="4.6" y="0.8" width="13" height="16.8" fill="#f4f4f4" stroke="#a8a8a8" stroke-width="0.8"/><g stroke="#c2c2c2" stroke-width="0.9"><line x1="8" y1="3.6" x2="15.8" y2="3.6"/><line x1="8" y1="6" x2="15.8" y2="6"/><line x1="8" y1="8.4" x2="15.8" y2="8.4"/><line x1="8" y1="10.8" x2="15.8" y2="10.8"/><line x1="8" y1="13.2" x2="15.8" y2="13.2"/></g><path d="M0.8 2.6 H4.4 V1.4 L7.6 4.2 L4.4 7 V5.8 H0.8 Z" fill="#2f63c8"/><circle cx="3.8" cy="9.2" r="2.7" fill="#e0332a"/><path d="M0.4 12.6 H7.4 L3.9 17 Z" fill="#4bb04a"/><rect x="2.8" y="11.4" width="2.2" height="2" fill="#4bb04a"/></svg>
<div class="t num it" style="left:480.40px;top:324.08px;font-size:10.9px;color:#3d3d3d;letter-spacing:-0.725px;">PDF<span style="font-size:10.0px">合并</span></div>
<div class="t cn al" style="left:645.00px;top:325.08px;font-size:10.0px;color:#3d3d3d;">允许</div>
<div class="t cn al" style="left:809.40px;top:325.08px;font-size:10.0px;color:#3d3d3d;letter-spacing:0.200px;">允许</div>
<svg style="left:413.4px;top:347.45px" width="12" height="12"><rect x="0.9" y="0.9" width="10" height="10" fill="#fff" stroke="#ababab" stroke-width="0.9"/><path d="M3 5.8 L5 7.9 L8.9 3.7" fill="none" stroke="#333" stroke-width="1.15"/></svg>
<svg style="left:455px;top:344.45px" width="18" height="18" viewBox="0 0 18 18"><rect x="1.5" y="0.9" width="15.2" height="16.4" rx="0.8" fill="#f4fcff" stroke="#2ba3cf" stroke-width="1.3"/><line x1="1.5" y1="6.2" x2="16.7" y2="6.2" stroke="#2ba3cf" stroke-width="1.2"/><line x1="1.5" y1="11.8" x2="16.7" y2="11.8" stroke="#2ba3cf" stroke-width="1.2"/><rect x="2.4" y="7" width="13.4" height="4" fill="#d8f3fb"/></svg>
<div class="t num it" style="left:480.40px;top:345.45px;font-size:10.9px;color:#3d3d3d;letter-spacing:-0.121px;">Foxtable-Colink</div>
<div class="t cn al" style="left:645.00px;top:346.45px;font-size:10.0px;color:#3d3d3d;">允许</div>
<div class="t cn al" style="left:809.40px;top:346.45px;font-size:10.0px;color:#3d3d3d;letter-spacing:0.200px;">允许</div>
<svg style="left:413.4px;top:368.82px" width="12" height="12"><rect x="0.9" y="0.9" width="10" height="10" fill="#fff" stroke="#ababab" stroke-width="0.9"/><path d="M3 5.8 L5 7.9 L8.9 3.7" fill="none" stroke="#333" stroke-width="1.15"/></svg>
<svg style="left:455px;top:365.82px" width="18" height="18" viewBox="0 0 18 18"><rect x="1" y="0.4" width="16.8" height="17" rx="1.4" fill="#cf120e"/><path d="M1 12.4 H17.8 V16 A1.4 1.4 0 0 1 16.4 17.4 H2.4 A1.4 1.4 0 0 1 1 16 Z" fill="#a30b09"/><path d="M4 14 C7.4 12.4 9.6 8.4 9.3 3.4 C8.9 2.4 8 2.8 8.3 4.4 C9 8 11.2 10.8 15.4 11.6 C11.4 10.8 7.4 12.2 4 14 Z" fill="none" stroke="#fff" stroke-width="1.15" stroke-linejoin="round"/></svg>
<div class="t num it" style="left:481.40px;top:366.82px;font-size:10.9px;color:#3d3d3d;letter-spacing:-0.073px;">Adobe Acrobat DC</div>
<div class="t cn al" style="left:645.00px;top:367.82px;font-size:10.0px;color:#3d3d3d;">允许</div>
<div class="t cn al" style="left:809.40px;top:367.82px;font-size:10.0px;color:#3d3d3d;letter-spacing:0.200px;">允许</div>
<svg style="left:413.4px;top:390.19px" width="12" height="12"><rect x="0.9" y="0.9" width="10" height="10" fill="#fff" stroke="#ababab" stroke-width="0.9"/><path d="M3 5.8 L5 7.9 L8.9 3.7" fill="none" stroke="#333" stroke-width="1.15"/></svg>
<svg style="left:455px;top:387.19px" width="18" height="18" viewBox="0 0 18 18"><rect x="1.4" y="1.2" width="16" height="16" rx="1.6" fill="#f2f4fa" stroke="#3e5ec0" stroke-width="1.9"/><path d="M3.4 3.4 H7.2 L9.2 11.4 V15 H3.4 Z" fill="#fff"/><path d="M15.4 3.4 H11.6 L9.6 11.4 V15 H15.4 Z" fill="#b9c1d8"/><path d="M7.2 3.4 L9.4 9.4 L11.6 3.4 L9.4 15 Z" fill="#4a64b6"/></svg>
<div class="t num it" style="left:480.40px;top:388.19px;font-size:10.9px;color:#3d3d3d;">MindManager</div>
<div class="t cn al" style="left:645.00px;top:389.19px;font-size:10.0px;color:#3d3d3d;">允许</div>
<div class="t cn al" style="left:809.40px;top:389.19px;font-size:10.0px;color:#3d3d3d;letter-spacing:0.200px;">允许</div>
<svg style="left:413.4px;top:411.56px" width="12" height="12"><rect x="0.9" y="0.9" width="10" height="10" fill="#fff" stroke="#ababab" stroke-width="0.9"/><path d="M3 5.8 L5 7.9 L8.9 3.7" fill="none" stroke="#333" stroke-width="1.15"/></svg>
<svg style="left:455px;top:408.56px" width="18" height="18" viewBox="0 0 18 18"><rect x="1.2" y="0.8" width="16.2" height="17" fill="#cfdcfb" stroke="#5370d0" stroke-width="1.4"/><path d="M3.4 10 L8.2 7.2 L14.8 13 L9.6 16.4 Z" fill="#fff" stroke="#58a862" stroke-width="0.9"/><path d="M5 3.4 L8.6 2.4 L9.6 7.4 L5.8 8 Z" fill="#e0402c"/><path d="M9.8 2 L12.6 3 L12 8 L9.6 7.6 Z" fill="#3a49b8"/><path d="M12.8 2.6 L15.6 2 L15.6 9.4 L12.4 8.2 Z" fill="#c23cae"/><circle cx="10.4" cy="12" r="2" fill="#eef7ee" stroke="#58a862" stroke-width="0.7"/></svg>
<div class="t num it" style="left:481.40px;top:409.56px;font-size:10.9px;color:#3d3d3d;letter-spacing:-0.575px;">CAJViewer</div>
<div class="t cn al" style="left:645.00px;top:410.56px;font-size:10.0px;color:#3d3d3d;">允许</div>
<div class="t cn al" style="left:809.40px;top:410.56px;font-size:10.0px;color:#3d3d3d;letter-spacing:0.200px;">允许</div>
<svg style="left:413.4px;top:432.93px" width="12" height="12"><rect x="0.9" y="0.9" width="10" height="10" fill="#fff" stroke="#ababab" stroke-width="0.9"/><path d="M3 5.8 L5 7.9 L8.9 3.7" fill="none" stroke="#333" stroke-width="1.15"/></svg>
<svg style="left:455px;top:429.93px" width="18" height="18" viewBox="0 0 18 18"><path d="M0.4 0.4 H14.2 L17.8 4 V18 H0.4 Z" fill="#8a0e9c"/><path d="M14.2 0.4 V4 H17.8 Z" fill="#e9d2ef"/><path d="M3.2 2.8 C8 4 12.6 8 14.8 14 L11.6 15.2 C8 13 4.6 8.6 3.2 2.8 Z" fill="#fff"/><circle cx="10.4" cy="10.8" r="1.1" fill="#8a0e9c"/><path d="M4.4 4.4 L9.8 10" stroke="#8a0e9c" stroke-width="0.6"/></svg>
<div class="t num it" style="left:481.40px;top:430.93px;font-size:10.9px;color:#3d3d3d;letter-spacing:-0.686px;"><span style="font-size:10.0px">福昕</span>PDF<span style="font-size:10.0px">编辑器</span></div>
<div class="t cn al" style="left:645.00px;top:431.93px;font-size:10.0px;color:#3d3d3d;">允许</div>
<div class="t cn al" style="left:809.40px;top:431.93px;font-size:10.0px;color:#3d3d3d;letter-spacing:0.200px;">允许</div>
<svg style="left:413.4px;top:454.30px" width="12" height="12"><rect x="0.9" y="0.9" width="10" height="10" fill="#fff" stroke="#ababab" stroke-width="0.9"/><path d="M3 5.8 L5 7.9 L8.9 3.7" fill="none" stroke="#333" stroke-width="1.15"/></svg>
<svg style="left:455px;top:451.30px" width="18" height="18" viewBox="0 0 18 18"><rect x="0.6" y="-0.4" width="17.2" height="18.8" rx="3.2" fill="#b8191e"/><text x="9.2" y="5.8" font-size="4.8" font-weight="bold" fill="#fff" text-anchor="middle" font-family='"Liberation Sans",sans-serif'>DWG</text><path d="M7.2 7.4 H11.2 L9.2 9.8 Z" fill="#fff"/><text x="9.2" y="15" font-size="4.8" font-weight="bold" fill="#fff" text-anchor="middle" font-family='"Liberation Sans",sans-serif'>PDF</text></svg>
<div class="t num it" style="left:481.40px;top:452.30px;font-size:10.9px;color:#3d3d3d;letter-spacing:-0.365px;">Any DWG to PDF Converter</div>
<div class="t cn al" style="left:645.00px;top:453.30px;font-size:10.0px;color:#3d3d3d;">允许</div>
<div class="t cn al" style="left:809.40px;top:453.30px;font-size:10.0px;color:#3d3d3d;letter-spacing:0.200px;">允许</div>
<svg style="left:413.4px;top:475.67px" width="12" height="12"><rect x="0.9" y="0.9" width="10" height="10" fill="#fff" stroke="#ababab" stroke-width="0.9"/><path d="M3 5.8 L5 7.9 L8.9 3.7" fill="none" stroke="#333" stroke-width="1.15"/></svg>
<svg style="left:455px;top:472.67px" width="18" height="18" viewBox="0 0 18 18"><rect x="1" y="0.4" width="16.8" height="17" rx="1.4" fill="#cf120e"/><path d="M1 12.4 H17.8 V16 A1.4 1.4 0 0 1 16.4 17.4 H2.4 A1.4 1.4 0 0 1 1 16 Z" fill="#a30b09"/><path d="M4 14 C7.4 12.4 9.6 8.4 9.3 3.4 C8.9 2.4 8 2.8 8.3 4.4 C9 8 11.2 10.8 15.4 11.6 C11.4 10.8 7.4 12.2 4 14 Z" fill="none" stroke="#fff" stroke-width="1.15" stroke-linejoin="round"/></svg>
<div class="t num it" style="left:481.40px;top:473.67px;font-size:10.9px;color:#3d3d3d;letter-spacing:-0.173px;">Adobe Reader</div>
<div class="t cn al" style="left:645.00px;top:474.67px;font-size:10.0px;color:#3d3d3d;">允许</div>
<div class="t cn al" style="left:809.40px;top:474.67px;font-size:10.0px;color:#3d3d3d;letter-spacing:0.200px;">允许</div>
<div class="r" style="left:456px;top:493.9px;width:16.8px;height:1.2px;background:#e6a29e;border-radius:1.5px 1.5px 0 0"></div>
<div class="r" style="left:381px;top:131.8px;width:662.4px;height:381px;border:3px solid #e81e16;border-radius:2.5px"></div>
</body></html>
